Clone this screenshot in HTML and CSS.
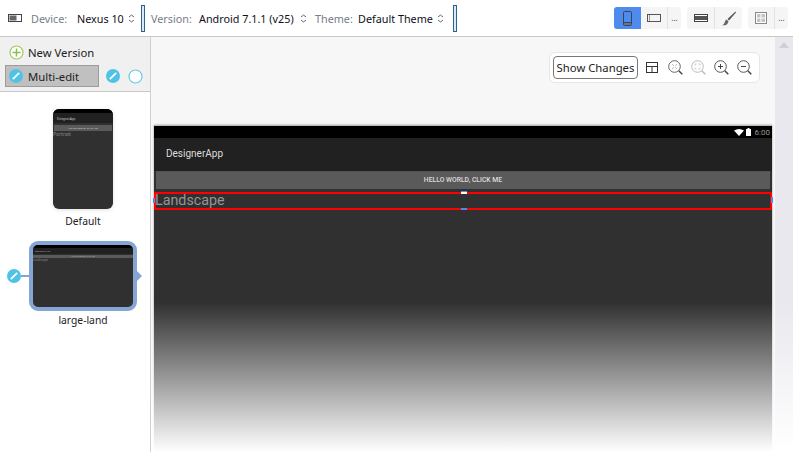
FILE: index.html
```html
<!DOCTYPE html>
<html lang="en">
<head>
<meta charset="utf-8">
<title>Designer</title>
<link rel="stylesheet" href="styles.css">
</head>
<body>
<header class="toolbar">
  <svg class="device-icon" width="14" height="8" viewBox="0 0 14 8"><rect x=".5" y=".5" width="13" height="7" fill="#fff" stroke="#444"/><rect x="1.500" y="1.500" width="7" height="5" fill="#666"/></svg>
  <span class="lbl lbl-device">Device:</span><span class="val val-device">Nexus 10</span>
  <svg class="chev" width="7" height="9" viewBox="0 0 7 9"><path d="M1 3l2.500-2L6 3M1 6l2.500 2L6 6" fill="none" stroke="#666"/></svg>
  <i class="sep"></i>
  <span class="lbl lbl-version">Version:</span><span class="val val-version">Android 7.1.1 (v25)</span>
  <svg class="chev" width="7" height="9" viewBox="0 0 7 9"><path d="M1 3l2.500-2L6 3M1 6l2.500 2L6 6" fill="none" stroke="#666"/></svg>
  <span class="lbl lbl-theme">Theme:</span><span class="val val-theme">Default Theme</span>
  <svg class="chev" width="7" height="9" viewBox="0 0 7 9"><path d="M1 3l2.500-2L6 3M1 6l2.500 2L6 6" fill="none" stroke="#666"/></svg>
  <i class="sep sep-b"></i>
  <div class="tool-groups">
    <div class="group">
      <span class="tool tool-on"><svg width="9" height="15" viewBox="0 0 9 15"><rect x=".5" y=".5" width="8" height="14" rx="1" fill="none" stroke="#444"/><path d="M1 11.500h7" stroke="#444"/><path d="M1 13h7" stroke="#666"/></svg></span>
      <span class="tool tool-land"><svg width="14" height="8" viewBox="0 0 14 8"><rect x=".5" y=".5" width="13" height="7" fill="none" stroke="#555"/><path d="M2.500 1v6" stroke="#999"/></svg></span>
      <span class="more">...</span>
    </div>
    <div class="group">
      <span class="tool tool-wide"><svg width="14" height="8" viewBox="0 0 14 8"><rect x=".5" y=".5" width="13" height="7" fill="#fff" stroke="#444"/><rect x="1" y="2" width="12" height="4" fill="#555"/></svg></span>
      <span class="tool tool-brush"><svg width="14" height="15" viewBox="0 0 14 15"><path d="M13.500 .5L5.500 8l1.500 1.500L14 1.500z" fill="#555"/><path d="M4.500 8.500C2.800 9.200 3.200 11 2.200 12.500 1.700 13.300 1 13.600 .3 14.200c2.700.6 5.900-.6 6.200-4z" fill="#666"/></svg></span>
    </div>
    <div class="group">
      <span class="tool tool-grid"><svg width="12" height="12" viewBox="0 0 12 12"><rect x=".5" y=".5" width="11" height="11" fill="#fff" stroke="#888"/><rect x="2" y="2" width="3.500" height="3.500" fill="#c4c4c4"/><rect x="6.500" y="2" width="3.500" height="3.500" fill="#c4c4c4"/><rect x="2" y="6.500" width="3.500" height="3.500" fill="#c4c4c4"/><rect x="6.500" y="6.500" width="3.500" height="3.500" fill="#c4c4c4"/></svg></span>
      <span class="more">...</span>
    </div>
  </div>
</header>
<div class="main">
  <aside class="sidebar">
    <div class="side-head">
      <div class="new-row">
        <svg class="plus" width="15" height="15" viewBox="0 0 15 15"><circle cx="7.500" cy="7.500" r="6.500" fill="#fff" stroke="#9ccb5c" stroke-width="1.200"/><path d="M7.500 3.500v8M3.500 7.500h8" stroke="#8dc04a" stroke-width="1.500"/></svg>
        <span>New Version</span>
      </div>
      <div class="multi-row">
        <div class="multi">
          <svg class="pen" width="14" height="14" viewBox="0 0 14 14"><circle cx="7" cy="7" r="7" fill="#4fc3e6"/><path d="M3.800 10.200l6.400-6.400" stroke="#fff" stroke-width="1.800"/></svg>
          <span>Multi-edit</span>
        </div>
        <svg class="pen pen-a" width="14" height="14" viewBox="0 0 14 14"><circle cx="7" cy="7" r="7" fill="#4fc3e6"/><path d="M3.800 10.200l6.400-6.400" stroke="#fff" stroke-width="1.800"/></svg>
        <svg class="pen-b" width="15" height="15" viewBox="0 0 15 15"><circle cx="7.500" cy="7.500" r="6.500" fill="#fff" stroke="#68cbe9" stroke-width="1.200"/></svg>
      </div>
    </div>
    <div class="variants">
      <div class="thumb-portrait">
        <div class="t-status"></div>
        <div class="t-bar">DesignerApp</div>
        <div class="t-btn">HELLO WORLD, CLICK ME</div>
        <div class="t-text">Portrait</div>
      </div>
      <div class="cap cap-default">Default</div>
      <div class="sel-row">
        <svg class="pen" width="14" height="14" viewBox="0 0 14 14"><circle cx="7" cy="7" r="7" fill="#4fc3e6"/><path d="M3.800 10.200l6.400-6.400" stroke="#fff" stroke-width="1.800"/></svg>
        <i class="link"></i>
        <div class="thumb-land">
          <div class="land-inner">
            <div class="l-status"></div>
            <div class="l-bar">DesignerApp</div>
            <div class="l-btn">HELLO WORLD, CLICK ME</div>
            <div class="l-text">Landscape</div>
          </div>
          <i class="arrow"></i>
        </div>
      </div>
      <div class="cap cap-land">large-land</div>
    </div>
  </aside>
  <main class="canvas">
    <div class="zoombar">
      <button class="show">Show Changes</button>
      <svg class="zi zi-first" width="12" height="11" viewBox="0 0 12 11"><rect x=".5" y=".5" width="11" height="10" fill="none" stroke="#333"/><path d="M.5 4.500h11M6 4.500V10.500" stroke="#333"/></svg>
      <svg class="zi zi-mag" width="15" height="15" viewBox="0 0 15 15"><circle cx="6.500" cy="6.500" r="5.800" fill="none" stroke="#666"/><path d="M4.500 4.500l1 1M8.500 4.500l-1 1M4.500 8.500l1-1M8.500 8.500l-1-1" stroke="#888"/><path d="M10.800 10.800l3.500 3.500" stroke="#444" stroke-width="1.500"/></svg>
      <svg class="zi" width="15" height="15" viewBox="0 0 15 15"><circle cx="6.500" cy="6.500" r="5.800" fill="none" stroke="#bbb"/><path d="M4 5.500V4h1.500M7.500 4H9v1.500M9 7.500V9H7.500M5.500 9H4V7.500" fill="none" stroke="#ccc"/><path d="M10.800 10.800l3.500 3.500" stroke="#bbb" stroke-width="1.500"/></svg>
      <svg class="zi" width="15" height="15" viewBox="0 0 15 15"><circle cx="6.500" cy="6.500" r="5.800" fill="none" stroke="#555"/><path d="M4 6.500h5M6.500 4v5" stroke="#444"/><path d="M10.800 10.800l3.500 3.500" stroke="#444" stroke-width="1.500"/></svg>
      <svg class="zi" width="15" height="15" viewBox="0 0 15 15"><circle cx="6.500" cy="6.500" r="5.800" fill="none" stroke="#555"/><path d="M4 6.500h5" stroke="#444"/><path d="M10.800 10.800l3.500 3.500" stroke="#444" stroke-width="1.500"/></svg>
    </div>
    <div class="device">
      <div class="status">
        <svg width="10" height="7" viewBox="0 0 10 7"><path d="M0 1.500Q5-1.500 10 1.500L5 7z" fill="#fff"/></svg>
        <svg width="5" height="8" viewBox="0 0 5 8"><path d="M1.500 0h2v1H5v7H0V1h1.500z" fill="#fff"/></svg>
        <span>6:00</span>
      </div>
      <div class="appbar">DesignerApp</div>
      <div class="hello">HELLO WORLD, CLICK ME</div>
      <div class="selected">
        <span class="sel-text">Landscape</span>
        <i class="h h-top"></i><i class="h h-bottom"></i><i class="h h-left"></i><i class="h h-right"></i>
      </div>
    </div>
  </main>
  <div class="scroll"><i class="scroll-up"></i></div>
  <div class="fade"></div>
</div>
</body>
</html>
```
FILE: styles.css
```css
* { box-sizing: border-box; }
html, body { margin: 0; height: 100%; }
body { width: 793px; height: 452px; overflow: hidden; background: #fff; font-family: "Noto Sans", "Open Sans", sans-serif; font-size: 11.300px; color: #222; display: flex; flex-direction: column; }
i { display: block; }

.toolbar { height: 37px; flex: none; border-bottom: 1px solid #c8c8c8; display: flex; align-items: center; padding: 0 5px 0 8px; background: #fff; font-size: 10.800px; white-space: nowrap; }
.device-icon { margin-right: 9px; }
.lbl { color: #777d88; padding-top: 1px; }
.val { color: #10101c; padding-top: 1px; }
.lbl-device { width: 46px; }
.val-device { width: 46px; }
.chev { margin-left: 5px; }
.sep { width: 4px; height: 27px; margin: 1px 0 0 6px; background: #dfe8f0; border: 1px solid #2a6496; }
.sep-b { margin-left: 9px; }
.lbl-version { margin-left: 6px; width: 48px; }
.val-version { width: 95px; }
.val-version + .chev { margin-left: 6px; }
.lbl-theme { margin-left: 8px; width: 43px; }
.val-theme { width: 74px; }
.tool-groups { margin-left: auto; display: flex; gap: 6px; }
.group { height: 22px; display: flex; align-items: center; background: #f5f5f5; border-radius: 4px; }
.tool { height: 22px; display: flex; align-items: center; justify-content: center; border-right: 1px solid #e2e2e2; }
.tool-on { width: 27px; background: #4d8bee; border-radius: 3px 0 0 3px; border-right: 0; }
.tool-land { width: 27px; }
.tool-wide { width: 28px; }
.tool-brush { width: 27px; border-right: 0; }
.tool-grid { width: 27px; }
.more { width: 13px; text-align: center; font-size: 8px; line-height: 20px; color: #444; }

.main { flex: 1; display: flex; position: relative; min-height: 0; }
.sidebar { width: 151px; flex: none; border-right: 1px solid #d0d0d0; display: flex; flex-direction: column; }
.side-head { height: 55px; background: #f0f0f0; border-bottom: 1px solid #c8c8c8; padding: 7px 0 0 5px; }
.new-row { display: flex; align-items: center; height: 17px; padding-left: 4px; gap: 4px; }
.multi-row { display: flex; align-items: center; margin-top: 4px; }
.multi { width: 94px; height: 22px; background: #c0c0c0; border: 1px solid #9c9c9c; display: flex; align-items: center; gap: 5px; padding-left: 3px; }
.pen-a { margin-left: 7px; }
.pen-b { margin-left: 8px; }

.variants { flex: 1; display: flex; flex-direction: column; align-items: center; }
.thumb-portrait { width: 60px; height: 100px; margin: 17px 0 0 16px; background: #303030; border-radius: 6px; overflow: hidden; box-shadow: 0 1px 4px rgba(0,0,0,.12); font-size: 3px; color: #ccc; display: flex; flex-direction: column; }
.t-status { height: 4px; background: #000; flex: none; }
.t-bar { height: 10px; background: #212121; padding: 2px 0 0 4px; flex: none; line-height: 8px; }
.t-btn { height: 6px; margin: 2px 1px 0; background: #5a5a5a; line-height: 6px; text-align: center; font-size: 2.500px; flex: none; }
.t-text { font-size: 5px; line-height: 6px; color: #888; }
.cap { text-align: center; font-size: 10.300px; line-height: 14px; color: #222; }
.cap-default { margin: 5px 0 0 16px; }
.sel-row { display: flex; align-items: center; align-self: flex-start; margin: 13px 0 0 7px; height: 70px; }
.link { width: 8px; height: 2px; background: #85a5d5; }
.thumb-land { position: relative; width: 108px; height: 70px; border: 4px solid #85a5d5; border-radius: 9px; background: #303030; }
.land-inner { height: 100%; border-radius: 5px; overflow: hidden; font-size: 2.500px; color: #aaa; }
.l-status { height: 3px; background: #000; }
.l-bar { height: 6px; background: #212121; padding-left: 2px; line-height: 6px; }
.l-btn { height: 3px; background: #5a5a5a; line-height: 3px; text-align: center; font-size: 2px; margin-top: 1px; }
.l-text { font-size: 3px; line-height: 5px; color: #888; }
.arrow { position: absolute; right: -9px; top: 26px; border-left: 5px solid #85a5d5; border-top: 5px solid transparent; border-bottom: 5px solid transparent; }
.cap-land { margin: 2px 0 0 16px; }

.canvas { flex: 1; min-width: 0; background: #f7f7f7; display: flex; flex-direction: column; padding: 15px 0 0 3px; }
.zoombar { align-self: flex-end; margin-right: 15px; width: 211px; height: 31px; background: #fff; border: 1px solid #e6e6e6; border-radius: 6px; display: flex; align-items: center; padding-left: 3px; }
.show { width: 85px; height: 23px; padding: 0; border: 1px solid #777; border-radius: 4px; background: #fff; font: 11.300px "Noto Sans", sans-serif; color: #222; white-space: nowrap; }
.zi { margin-left: 8px; flex: none; }
.zi-first { margin-left: 8px; }
.zi-mag { margin-left: 10px; }
.device { margin-top: 42px; width: 618px; flex: 1; background: #303030; border-top: 1px solid #bbb; box-shadow: 0 0 2px rgba(0,0,0,.4); color: #ddd; font-family: Roboto, sans-serif; }
.status { height: 12px; background: #000; display: flex; align-items: center; justify-content: flex-end; gap: 2px; padding-right: 2px; font-size: 8px; color: #999; }
.status span { margin-left: 2px; }
.appbar { height: 33px; background: #212121; font-size: 10px; line-height: 32px; padding-left: 12px; }
.hello { margin: 0 2px; height: 18px; background: #5a5a5a; border-top: 1px solid #535353; text-align: center; font-size: 6.800px; font-weight: 500; line-height: 17px; }
.selected { position: relative; margin-top: 3px; height: 18px; border: 2px solid #f00; color: #959595; font-size: 14.300px; line-height: 13px; white-space: nowrap; }
.sel-text { margin-left: -1px; }
.h { position: absolute; background: #4d8bee; }
.h-top { left: 305px; top: -3px; width: 6px; height: 3px; background: #fff; border-top: 1px solid #4d8bee; }
.h-bottom { left: 305px; bottom: -2px; width: 6px; height: 2px; }
.h-left { left: -3px; top: 4px; width: 2px; height: 5px; }
.h-right { right: -3px; top: 3px; width: 2px; height: 6px; }

.scroll { width: 18px; flex: none; background: #e8e8ee; position: relative; }
.scroll-up { position: absolute; left: 4px; top: 5px; border-bottom: 6px solid #d0d0d4; border-left: 5px solid transparent; border-right: 5px solid transparent; }
.fade { position: absolute; left: 151px; right: 0; bottom: 0; height: 150px; background: linear-gradient(to bottom, rgba(255,255,255,0), #fff); pointer-events: none; }
```
